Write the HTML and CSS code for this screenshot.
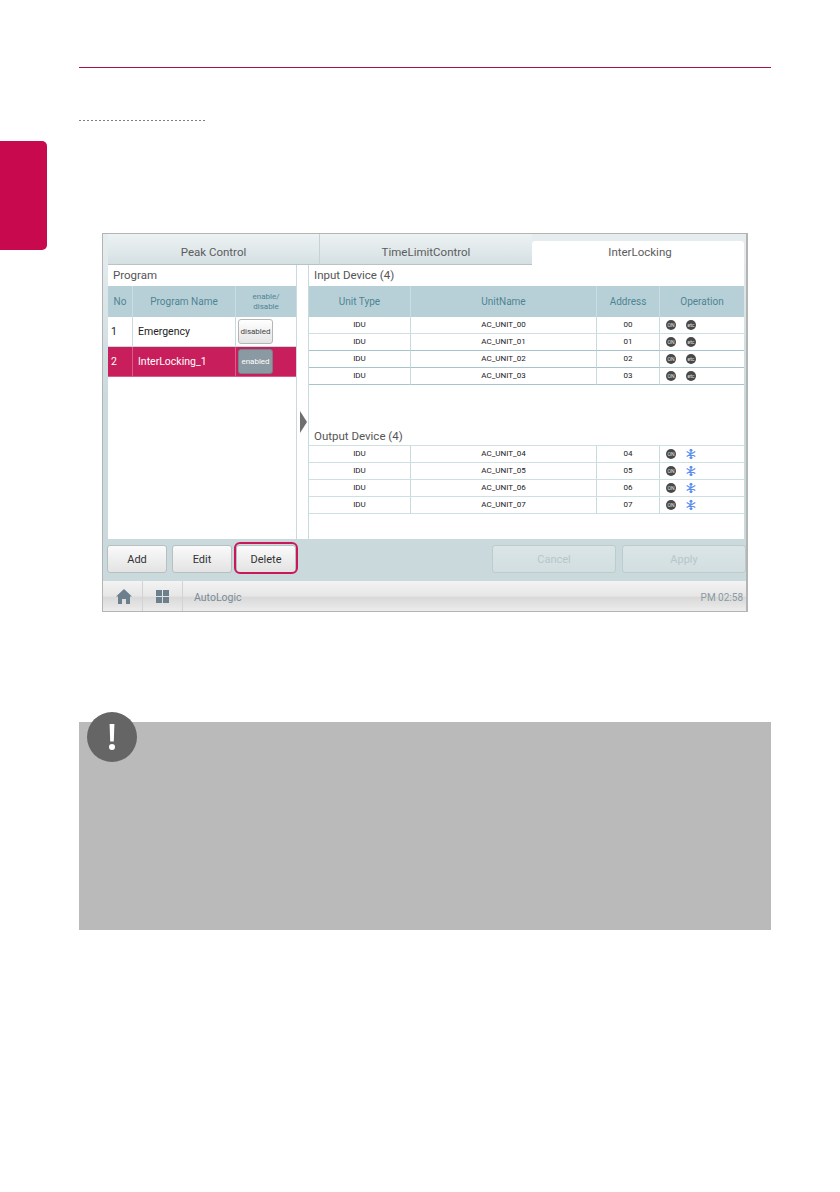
FILE: index.html
```html
<!DOCTYPE html>
<html lang="en">
<head>
  <meta charset="UTF-8" />
  <title>InterLocking - AutoLogic</title>
  <link rel="stylesheet" href="styles.css">
</head>
<body>
  <div class="page">
    <div class="side"><div class="side-tab"></div></div>
    <div class="content">
      <div class="rule"></div>
      <div class="dots"></div>

      <div class="device">
        <div class="tabs">
          <div class="tab">Peak Control</div>
          <div class="tab">TimeLimitControl</div>
          <div class="tab active">InterLocking</div>
        </div>

        <div class="panel">
          <div class="left-pane">
            <div class="pane-title">Program</div>
            <table class="prog">
              <colgroup><col class="c-no"><col class="c-name"><col class="c-en"></colgroup>
              <thead>
                <tr><th>No</th><th>Program Name</th><th class="small">enable/<br>disable</th></tr>
              </thead>
              <tbody>
                <tr><td>1</td><td>Emergency</td><td class="en"><span class="toggle">disabled</span></td></tr>
                <tr class="selected"><td>2</td><td>InterLocking_1</td><td class="en"><span class="toggle on">enabled</span></td></tr>
              </tbody>
            </table>
          </div>

          <div class="gutter"><div class="arrow"></div></div>

          <div class="right-pane">
            <div class="pane-title">Input Device (4)</div>
            <table class="units">
              <colgroup><col class="c-type"><col class="c-unit"><col class="c-addr"><col class="c-op"></colgroup>
              <thead>
                <tr><th>Unit Type</th><th>UnitName</th><th>Address</th><th>Operation</th></tr>
              </thead>
              <tbody>
                <tr><td>IDU</td><td>AC_UNIT_00</td><td>00</td><td class="op"><span class="dot">ON</span><span class="dot">etc</span></td></tr>
                <tr class="dark"><td>IDU</td><td>AC_UNIT_01</td><td>01</td><td class="op"><span class="dot">ON</span><span class="dot">etc</span></td></tr>
                <tr class="dark"><td>IDU</td><td>AC_UNIT_02</td><td>02</td><td class="op"><span class="dot">ON</span><span class="dot">etc</span></td></tr>
                <tr class="dark"><td>IDU</td><td>AC_UNIT_03</td><td>03</td><td class="op"><span class="dot">ON</span><span class="dot">etc</span></td></tr>
              </tbody>
            </table>

            <div class="pane-title output">Output Device (4)</div>
            <table class="units boxed">
              <colgroup><col class="c-type"><col class="c-unit"><col class="c-addr"><col class="c-op"></colgroup>
              <tbody>
                <tr><td>IDU</td><td>AC_UNIT_04</td><td>04</td><td class="op"><span class="dot">ON</span><svg class="snow" viewBox="0 0 10 10"><use href="#flake"/></svg></td></tr>
                <tr><td>IDU</td><td>AC_UNIT_05</td><td>05</td><td class="op"><span class="dot">ON</span><svg class="snow" viewBox="0 0 10 10"><use href="#flake"/></svg></td></tr>
                <tr><td>IDU</td><td>AC_UNIT_06</td><td>06</td><td class="op"><span class="dot">ON</span><svg class="snow" viewBox="0 0 10 10"><use href="#flake"/></svg></td></tr>
                <tr><td>IDU</td><td>AC_UNIT_07</td><td>07</td><td class="op"><span class="dot">ON</span><svg class="snow" viewBox="0 0 10 10"><use href="#flake"/></svg></td></tr>
              </tbody>
            </table>
          </div>
        </div>

        <div class="button-bar">
          <div class="btn">Add</div>
          <div class="btn">Edit</div>
          <div class="btn marked">Delete</div>
          <div class="bar-space"></div>
          <div class="btn wide off">Cancel</div>
          <div class="btn wide off">Apply</div>
        </div>

        <div class="status-bar">
          <div class="status-cell home">
            <svg width="16" height="15" viewBox="0 0 16 15"><path d="M8 0 L16 7.5 L14 7.5 L14 15 L10 15 L10 10 L6 10 L6 15 L2 15 L2 7.5 L0 7.5 Z" fill="#6c7f8d"/></svg>
          </div>
          <div class="status-cell grid-cell">
            <svg width="13" height="13" viewBox="0 0 13 13"><path d="M0 0h6v6H0zM7 0h6v6H7zM0 7h6v6H0zM7 7h6v6H7z" fill="#6c7f8d"/></svg>
          </div>
          <div class="crumb">AutoLogic</div>
          <div class="clock">PM 02:58</div>
        </div>
      </div>

      <div class="note">
        <div class="note-icon">
          <svg width="50" height="50" viewBox="0 0 50 50">
            <circle cx="25" cy="25" r="25" fill="#656565"/>
            <path d="M22.6 12 h4.8 l-0.6 17.5 h-3.6 Z" fill="#fff"/>
            <circle cx="25" cy="35" r="3" fill="#fff"/>
          </svg>
        </div>
      </div>
    </div>
  </div>

  <svg class="defs" width="0" height="0">
    <symbol id="flake" viewBox="0 0 10 10">
      <path d="M5 0V10M.7 2.5L9.3 7.5M.7 7.5L9.3 2.5M3.6 .8L5 2.2L6.4 .8M3.6 9.2L5 7.8L6.4 9.2" stroke="#5b8def" stroke-width="1.3" fill="none"/>
    </symbol>
  </svg>
</body>
</html>
```

FILE: styles.css
```css
html, body { margin: 0; padding: 0; background: #fff; }
body { font-family: Roboto, "Liberation Sans", sans-serif; color: #333; }
.defs { display: block; }

.page { display: flex; width: 840px; height: 1192px; overflow: hidden; }
.side { width: 79px; padding-top: 141px; box-sizing: border-box; }
.side-tab { width: 47px; height: 109px; background: #c8094e; border-radius: 0 5px 5px 0; }
.content { width: 692px; }

.rule { height: 67px; border-bottom: 1px solid #a5123f; }
.dots { width: 128px; height: 1px; margin-top: 52px; background: repeating-linear-gradient(90deg, #808080 0 2px, transparent 2px 4px); }

/* device screen */
.device { width: 646px; height: 379px; margin: 112px 0 0 23px; box-sizing: border-box; border: 1px solid #b4b4b4; border-bottom-width: 2px; border-right-width: 2px; background: linear-gradient(#e6edef, #c9d9dc 45%); display: flex; flex-direction: column; }

.tabs { display: flex; height: 31px; padding: 0 2px 0 5px; flex: none; }
.tab { width: 211px; text-align: center; font-size: 11.5px; line-height: 36px; color: #5c5c5c; border-bottom: 1px solid #b9c2c4; background: linear-gradient(#edf2f3, #d5e0e3); border-right: 1px solid #c6d1d4; height: 30px; }
.tab:nth-child(2) { width: 212px; border-right: 0; }
.tab.active { margin-top: 7px; height: 24px; line-height: 22px; padding-left: 4px; box-sizing: border-box; background: #fff; border: 0; border-radius: 3px 3px 0 0; width: 212px; }

.panel { display: flex; height: 274px; margin: 0 2px 0 5px; background: #fff; flex: none; }
.left-pane { width: 188px; flex: none; border-right: 1px solid #c8dadd; }
.right-pane { flex: 1; border-left: 1px solid #c8dadd; }
.gutter { width: 11px; flex: none; padding: 146px 0 0 3px; box-sizing: border-box; }
.arrow { width: 0; height: 0; border-left: 7px solid #6f6f6f; border-top: 11px solid transparent; border-bottom: 11px solid transparent; }

.pane-title { height: 21px; line-height: 21px; padding-left: 5px; font-size: 11.5px; color: #555; }
.pane-title.output { margin-top: 43px; height: 17px; line-height: 17px; }

table { border-collapse: separate; border-spacing: 0; table-layout: fixed; width: 100%; }
th { height: 31px; padding: 0; background: #b7d0d8; color: #4f8492; font-weight: 400; font-size: 10px; border-left: 1px solid #c9dde2; }
th:first-child { border-left: 0; }
th.small { font-size: 8px; line-height: 10px; }

.c-no { width: 24px; }
.c-name { width: 103px; }
.c-en { width: 61px; }
.c-type { width: 101px; }
.c-unit { width: 186px; }
.c-addr { width: 63px; }

.prog td { height: 29px; padding: 0 0 0 5px; font-size: 10.5px; color: #222; border-left: 1px solid #c8dadd; border-bottom: 1px solid #c8dadd; }
.prog td:first-child { border-left: 0; padding-left: 3px; }
.prog td.en { padding: 0 0 0 2px; }
.prog .selected td { background: #c81e5b; color: #fff; border-color: #d85c87; }
.toggle { display: block; width: 35px; height: 25px; box-sizing: border-box; line-height: 24px; text-align: center; font-size: 8px; color: #444; border: 1px solid #b5b5b5; border-radius: 3px; background: linear-gradient(#fff, #e4e4e4); }
.toggle.on { background: #8b99a2; color: #fff; border-color: #75828a; }

.units td { height: 16px; padding: 0; text-align: center; font-size: 8px; line-height: 10px; color: #222; border-left: 1px solid #c8dadd; border-bottom: 1px solid #cfe0e3; }
.units td:first-child { border-left: 0; }
.units .dark td { border-bottom-color: #a7c4cc; }
.units.boxed { border-top: 1px solid #cfe0e3; }
.units td.op { text-align: left; padding-left: 6px; }
.dot { display: inline-block; vertical-align: middle; width: 10px; height: 10px; border-radius: 50%; margin-right: 10px; background: #484848; color: #e4e4e4; font-size: 5px; line-height: 10px; text-align: center; overflow: hidden; }
.snow { display: inline-block; vertical-align: middle; width: 10px; height: 10px; }

/* bottom buttons */
.button-bar { display: flex; height: 42px; padding: 6px 0 0 4px; box-sizing: border-box; background: #c9d9dc; flex: none; }
.btn { position: relative; width: 60px; height: 28px; margin-right: 5px; box-sizing: border-box; text-align: center; line-height: 27px; font-size: 11px; color: #333; border: 1px solid #b8bfc1; border-radius: 3px; background: linear-gradient(#fafafa, #e3e3e3); }
.btn.marked { margin-left: -1px; }
.btn.marked::after { content: ""; position: absolute; left: -3px; top: -4px; width: 64px; height: 32px; box-sizing: border-box; border: 2px solid #c8185a; border-radius: 6px; }
.bar-space { flex: 1; }
.btn.wide { width: 124px; margin: 0 0 0 6px; }
.btn.off { color: #b7c6c9; background: linear-gradient(#dbe5e7, #d2dee0); border-color: #bccbce; }

.status-bar { display: flex; align-items: center; height: 30px; flex: none; padding: 0 3px 0 0; background: linear-gradient(#f3f3f3, #e6e6e6 50%, #d9d9d9 55%, #ececec); }
.status-cell { display: flex; align-items: center; justify-content: center; height: 30px; box-sizing: border-box; border-right: 1px solid #d2d2d2; }
.status-cell.home { width: 40px; padding-left: 2px; }
.status-cell.grid-cell { width: 40px; }
.crumb { margin: 2px 0 0 11px; font-size: 10.5px; color: #7a8b97; }
.clock { margin: 3px 0 0 auto; font-size: 10px; color: #8a9aa3; }

/* note box */
.note { position: relative; height: 208px; margin-top: 110px; background: #bababa; }
.note-icon { position: absolute; left: 8px; top: -10px; width: 50px; height: 50px; }
.note-icon svg { display: block; }
```
